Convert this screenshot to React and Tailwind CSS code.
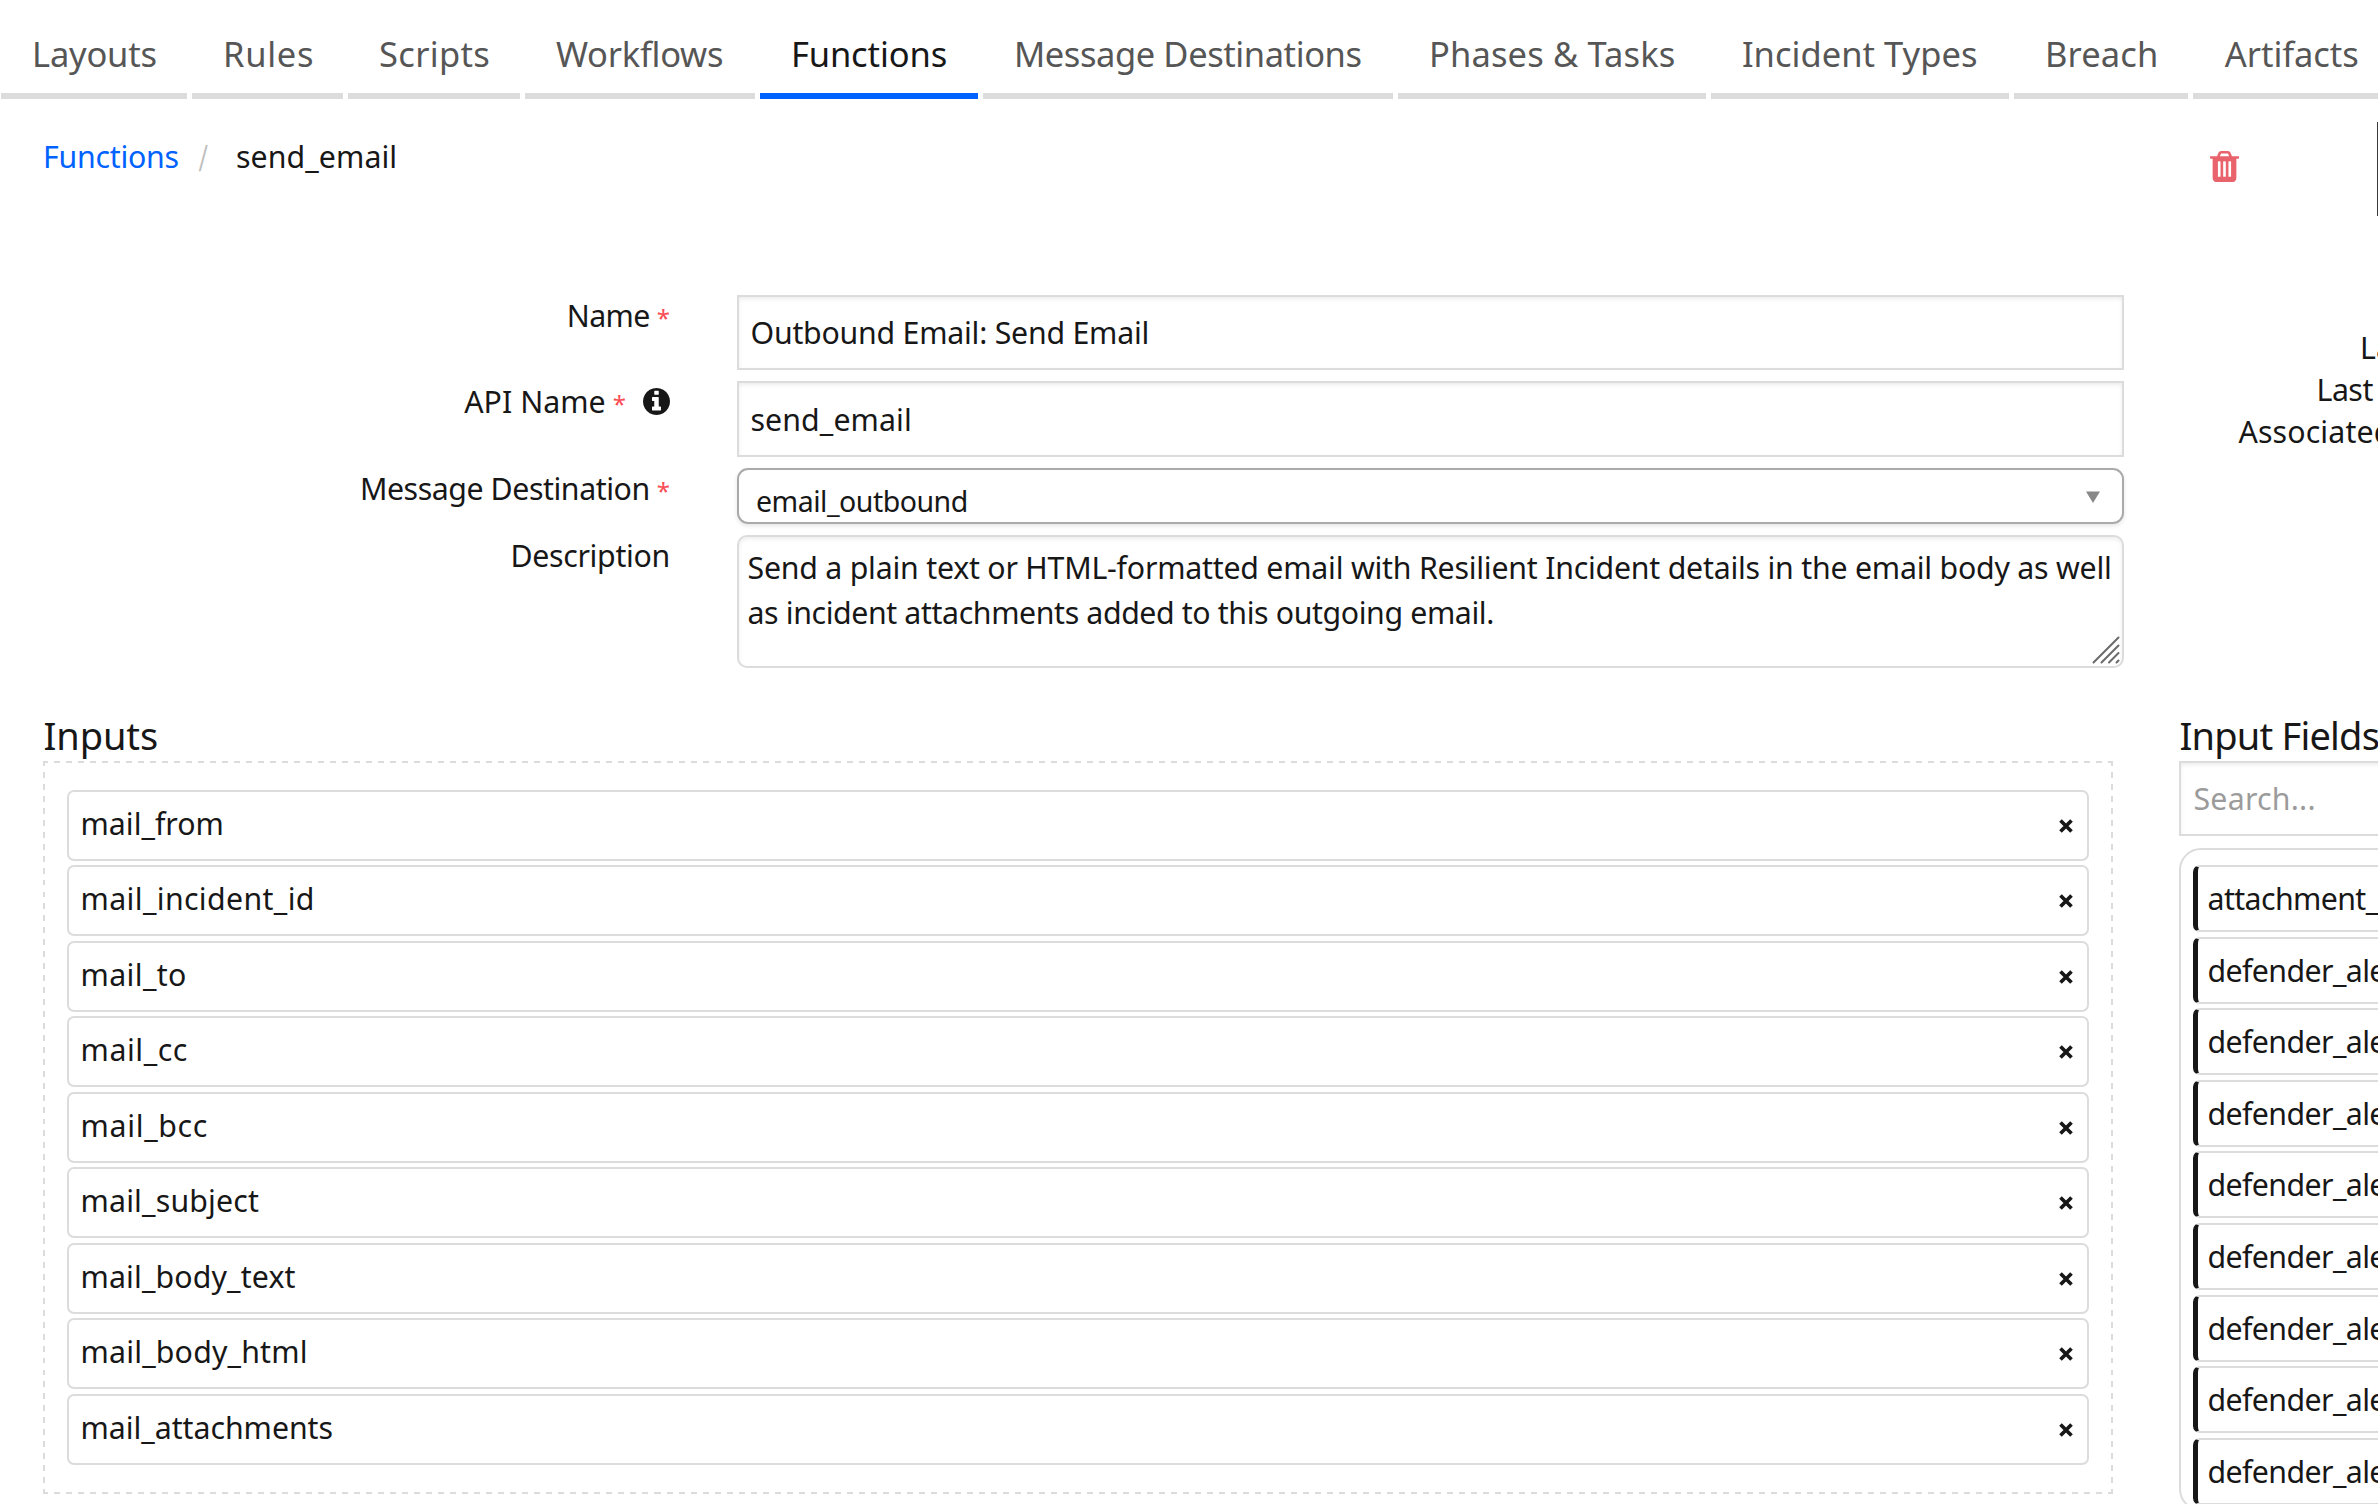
import React from 'react';

const tabs = [
  { label: 'Layouts', box: 'w-[186.4px]', text: 'tracking-[-0.2px]' },
  { label: 'Rules', box: 'w-[151.4px]', text: 'tracking-[0.72px]' },
  { label: 'Scripts', box: 'w-[172.4px]', text: 'tracking-[0.33px]' },
  { label: 'Workflows', box: 'w-[230.4px]', text: 'tracking-[-0.25px]' },
  { label: 'Functions', box: 'w-[218.4px]', text: 'tracking-[-0.12px]', active: true },
  { label: 'Message Destinations', box: 'w-[410.4px]', text: 'tracking-[-0.42px]' },
  { label: 'Phases & Tasks', box: 'w-[308.4px]', text: 'tracking-[0.15px]' },
  { label: 'Incident Types', box: 'w-[298.4px]', text: 'tracking-[0.03px]' },
  { label: 'Breach', box: 'w-[174.4px]', text: 'tracking-[0.15px]' },
  { label: 'Artifacts', box: 'w-[200px]', text: 'pl-[1px] tracking-[-0.06px]' },
];

const inputs = [
  { name: 'mail_from', text: 'tracking-[0px]' },
  { name: 'mail_incident_id', text: 'tracking-[0.36px]' },
  { name: 'mail_to', text: 'tracking-[0.36px]' },
  { name: 'mail_cc', text: 'tracking-[0.57px]' },
  { name: 'mail_bcc', text: 'tracking-[0.67px]' },
  { name: 'mail_subject', text: 'tracking-[0.16px]' },
  { name: 'mail_body_text', text: 'tracking-[0.13px]' },
  { name: 'mail_body_html', text: 'tracking-[0.18px]' },
  { name: 'mail_attachments', text: 'tracking-[-0.04px]' },
];

const fields = [
  'attachment_',
  'defender_alert',
  'defender_alert',
  'defender_alert',
  'defender_alert',
  'defender_alert',
  'defender_alert',
  'defender_alert',
  'defender_alert',
];

function TrashIcon() {
  return (
    <svg className="block h-[31px] w-[29px]" viewBox="192 128 1408 1536" preserveAspectRatio="none" fill="#e8636c">
      <path d="M704 1376v-704q0-14-9-23t-23-9h-64q-14 0-23 9t-9 23v704q0 14 9 23t23 9h64q14 0 23-9t9-23zm256 0v-704q0-14-9-23t-23-9h-64q-14 0-23 9t-9 23v704q0 14 9 23t23 9h64q14 0 23-9t9-23zm256 0v-704q0-14-9-23t-23-9h-64q-14 0-23 9t-9 23v704q0 14 9 23t23 9h64q14 0 23-9t9-23zm-544-992h448l-48-117q-7-9-17-11h-317q-10 2-17 11zm928 32v64q0 14-9 23t-23 9h-96v948q0 83-47 143.500t-113 60.500h-832q-66 0-113-58.500t-47-141.500v-952h-96q-14 0-23-9t-9-23v-64q0-14 9-23t23-9h309l70-167q15-37 54-63t79-26h320q40 0 79 26t54 63l70 167h309q14 0 23 9t9 23z" />
    </svg>
  );
}

function InfoIcon() {
  return (
    <svg className="mt-[7px] ml-[10px] block size-[27px] self-start" viewBox="128 128 1536 1536" fill="#171717">
      <path d="M1152 1376v-160q0-14-9-23t-23-9h-96v-512q0-14-9-23t-23-9h-320q-14 0-23 9t-9 23v160q0 14 9 23t23 9h96v320h-96q-14 0-23 9t-9 23v160q0 14 9 23t23 9h448q14 0 23-9t9-23zm-128-896v-160q0-14-9-23t-23-9h-192q-14 0-23 9t-9 23v160q0 14 9 23t23 9h192q14 0 23-9t9-23zm640 416q0 209-103 385.500t-279.500 279.500-385.500 103-385.500-103-279.500-279.500-103-385.500 103-385.500 279.500-279.500 385.500-103 385.500 103 279.500 279.500 103 385.500z" />
    </svg>
  );
}

function RemoveIcon() {
  return (
    <svg className="mt-px block size-[14px]" viewBox="0 0 14 14" stroke="#171717" strokeWidth="3.7">
      <path d="M1.500 1.500 12.500 12.500M12.500 1.500 1.500 12.500" />
    </svg>
  );
}

function FormRow({ label, tracking, required, info, children }) {
  return (
    <div className="flex">
      <div className="flex h-[42px] w-[670px] shrink-0 items-baseline justify-end gap-[7px] leading-[42px]">
        <span className={tracking}>{label}</span>
        {required && <span className="text-[24px] text-[#fa4d56]">*</span>}
        {info && <InfoIcon />}
      </div>
      <div className="ml-[67px] w-[1387px]">{children}</div>
    </div>
  );
}

export default function App() {
  return (
    <div className="h-[1504px] w-[2378px] overflow-hidden bg-white font-['Noto_Sans',sans-serif] text-[30.3px] whitespace-nowrap text-[#171717]">
      <nav className="flex h-[99px] gap-[4.6px] pl-px text-[34.5px]">
        {tabs.map((t) => (
          <div
            key={t.label}
            className={`${t.box} shrink-0 border-b-6 pt-[14px] pl-[31px] leading-[79px] ${
              t.active ? 'border-[#0062ff] text-[#171717]' : 'border-[#dcdcdc] text-[#565656]'
            }`}
          >
            <span className={t.text}>{t.label}</span>
          </div>
        ))}
      </nav>

      <header className="flex h-[196px] items-start">
        <div className="flex w-[2210px] shrink-0 pt-[38px] pl-[43px] leading-[40px]">
          <a className="w-[155px] tracking-[-0.25px] text-[#0062ff]">Functions</a>
          <span className="w-[38px] font-['Inter',sans-serif] text-[30px] font-light text-[#bebebe]">/</span>
          <span className="tracking-[0.08px]">send_email</span>
        </div>
        <div className="w-[167px] shrink-0 pt-[52px]">
          <TrashIcon />
        </div>
        <div className="mt-[23px] h-[94px] w-px shrink-0 bg-[#3c3c3c]" />
      </header>

      <section className="flex h-[373px]">
        <div className="flex w-[2124px] shrink-0 flex-col gap-[11px]">
          <FormRow label="Name" tracking="tracking-[-0.6px]" required>
            <div className="h-[75px] border-2 border-[#dcdcdc] pl-[11.5px] leading-[71px] tracking-[-0.24px] shadow-[inset_0_2px_4px_rgba(0,0,0,0.075)]">
              Outbound Email: Send Email
            </div>
          </FormRow>
          <FormRow label="API Name" tracking="tracking-[0.04px]" required info>
            <div className="h-[76px] border-2 border-[#dcdcdc] pl-[11.5px] leading-[74px] tracking-[0.1px] shadow-[inset_0_2px_4px_rgba(0,0,0,0.075)]">
              send_email
            </div>
          </FormRow>
          <FormRow label="Message Destination" tracking="tracking-[-0.44px]" required>
            <div className="flex h-[56px] items-start justify-between rounded-[11px] border-2 border-[#aaa] pr-[22px] pl-[17px] shadow-[0_2px_4px_rgba(0,0,0,0.1)]">
              <span className="pt-[10px] text-[28.5px] leading-[43px] tracking-[-0.5px]">email_outbound</span>
              <svg className="mt-[21px] h-[12px] w-[14px]" viewBox="0 0 14 12" fill="#888">
                <path d="M0 .5h14L7 12z" />
              </svg>
            </div>
          </FormRow>
          <FormRow label="Description" tracking="tracking-[-0.31px]">
            <div className="flex h-[133px] justify-between rounded-[10px] border-2 border-[#dcdcdc] pt-[8px] pl-[8.5px] leading-[45px] shadow-[inset_0_2px_4px_rgba(0,0,0,0.075)]">
              <div className="w-[1364px]">
                <div className="tracking-[-0.23px]">
                  Send a plain text or HTML-formatted email with Resilient Incident details in the email body as well
                </div>
                <div className="tracking-[-0.39px]">as incident attachments added to this outgoing email.</div>
              </div>
              <svg
                className="mr-[2px] mb-[2px] -ml-[28px] h-[28px] w-[28px] shrink-0 self-end"
                viewBox="0 0 28 28"
                stroke="#6a6a6a"
                strokeWidth="2"
                strokeLinecap="round"
              >
                <path d="M1.500 26.500 26.500 1.500M9.500 26.500 26.500 9.500M17 26.500 26.500 17M24.500 26.500 26.500 24.500" />
              </svg>
            </div>
          </FormRow>
        </div>
        <div className="w-[254px] shrink-0 overflow-hidden pt-[32px] leading-[42px]">
          <div className="pl-[236px]">La</div>
          <div className="pl-[192.5px] tracking-[-0.5px]">Last</div>
          <div className="pl-[114.5px] tracking-[0.12px]">Associated</div>
        </div>
      </section>

      <section className="flex items-start gap-[66px] pt-[43px] pl-[43px]">
        <div className="w-[2070px] shrink-0">
          <h2 className="mb-[2px] pl-[0.5px] text-[38px] leading-[48px] tracking-[-0.1px]">Inputs</h2>
          <div className="flex h-[733px] flex-col gap-[4.5px] bg-[image:repeating-linear-gradient(90deg,#dcdcdc_0_5px,transparent_5px_11px,#dcdcdc_11px_12.01px),repeating-linear-gradient(90deg,#dcdcdc_0_5px,transparent_5px_11px,#dcdcdc_11px_12.01px),repeating-linear-gradient(180deg,#dcdcdc_0_5px,transparent_5px_11px,#dcdcdc_11px_11.95px),repeating-linear-gradient(180deg,#dcdcdc_0_5px,transparent_5px_11px,#dcdcdc_11px_11.95px)] bg-[length:100%_2px,100%_2px,2px_100%,2px_100%] bg-[position:left_top,left_bottom,left_top,right_top] bg-no-repeat px-[24px] pt-[28.9px]">
            {inputs.map((f) => (
              <div
                key={f.name}
                className="flex h-[71px] shrink-0 items-center justify-between rounded-[7px] border-2 border-[#dcdcdc] pr-[14px] pl-[11.5px]"
              >
                <span className={`pb-[3px] leading-[60px] ${f.text}`}>{f.name}</span>
                <RemoveIcon />
              </div>
            ))}
          </div>
        </div>
        <div className="w-[560px] shrink-0">
          <h2 className="mb-[2px] pl-[0.5px] text-[38px] leading-[48px] tracking-[-0.8px]">Input Fields</h2>
          <div className="h-[75px] border-2 border-[#dcdcdc] pl-[12.5px] leading-[71px] tracking-[0.23px] text-[#9b9b9b] shadow-[inset_0_2px_4px_rgba(0,0,0,0.075)]">
            Search...
          </div>
          <div className="mt-[12px] flex h-[663px] flex-col gap-[4.6px] rounded-[22px] border-2 border-[#dcdcdc] px-[12px] pt-[15.1px]">
            {fields.map((name, i) => (
              <div
                key={i}
                className="h-[67px] shrink-0 rounded-[7px] border-2 border-l-[5px] border-[#dcdcdc] border-l-[#171717] pl-[9.5px] leading-[64px] tracking-[-0.6px]"
              >
                {name}
              </div>
            ))}
          </div>
        </div>
      </section>
    </div>
  );
}
